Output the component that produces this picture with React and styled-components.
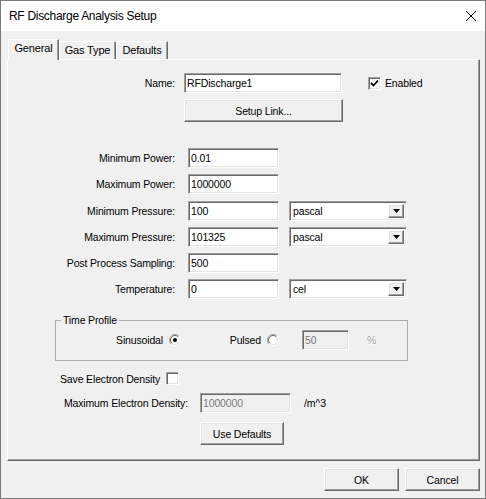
import React from "react";
import styled, { createGlobalStyle } from "styled-components";

const GlobalStyle = createGlobalStyle`
  html, body {
    margin: 0;
    padding: 0;
    background: #fff;
  }
  body {
    font-family: "Liberation Sans", Arial, sans-serif;
    font-size: 10.5px;
    letter-spacing: -0.15px;
    color: #000;
  }
`;

const raised = `
  border: 1px solid;
  border-color: #fff #696969 #696969 #fff;
  box-shadow: inset -1px -1px 0 #a0a0a0, inset 1px 1px 0 #e3e3e3;
  background: #f0f0f0;
`;

const sunken = `
  border: 1px solid;
  border-color: #a0a0a0 #fff #fff #a0a0a0;
  box-shadow: inset 1px 1px 0 #696969, inset -1px -1px 0 #e3e3e3;
`;

const Window = styled.div`
  width: 486px;
  height: 499px;
  box-sizing: border-box;
  border: 1px solid #7b7b7b;
  display: flex;
  flex-direction: column;
  background: #f0f0f0;
`;

const TitleBar = styled.div`
  height: 30px;
  flex: none;
  background: #fff;
  display: flex;
  align-items: center;
  justify-content: space-between;
  padding-left: 8px;
  font-size: 12px;
  letter-spacing: -0.3px;
`;

const CloseButton = styled.div`
  width: 28px;
  height: 30px;
  display: flex;
  align-items: center;
  justify-content: center;
`;

const Body = styled.div`
  flex: 1;
  display: flex;
  flex-direction: column;
  padding: 8px 5px 0 6px;
`;

const TabStrip = styled.div`
  display: flex;
  align-items: flex-end;
  height: 21px;
  margin: 0 0 -1px 1px;
  position: relative;
  z-index: 1;
`;

const Tab = styled.div`
  box-sizing: border-box;
  width: ${(p) => p.$w}px;
  height: ${(p) => (p.$active ? 21 : 18)}px;
  margin-bottom: ${(p) => (p.$active ? 0 : 1)}px;
  border: 1px solid;
  border-bottom: none;
  border-color: #fff #696969 transparent #fff;
  box-shadow: inset -1px 0 0 #a0a0a0;
  background: #f0f0f0;
  display: flex;
  justify-content: center;
  padding-top: 2px;
  font-size: 11px;
`;

const Panel = styled.div`
  box-sizing: border-box;
  height: 402px;
  border: 1px solid;
  border-color: #fff #696969 #696969 #fff;
  box-shadow: inset -1px -1px 0 #a0a0a0;
  padding-top: 13px;
  display: flex;
  flex-direction: column;
`;

const Row = styled.div`
  display: flex;
  align-items: center;
  height: ${(p) => p.$h || 20}px;
  margin-top: ${(p) => p.$top || 0}px;
  margin-left: ${(p) => p.$indent || 0}px;
`;

const Fields = styled.div`
  display: flex;
  flex-direction: column;
  gap: 6.25px;
  margin-top: 26px;
`;

const FieldLabel = styled.label`
  flex: none;
  box-sizing: border-box;
  width: ${(p) => p.$w}px;
  padding-right: ${(p) => p.$gap}px;
  text-align: right;
`;

const TextBox = styled.input`
  box-sizing: border-box;
  flex: none;
  width: ${(p) => p.$w}px;
  height: 20px;
  margin: 0 0 0 ${(p) => p.$left || 0}px;
  padding: 0 2px;
  ${sunken}
  background: ${(p) => (p.disabled ? "#f0f0f0" : "#fff")};
  color: ${(p) => (p.disabled ? "#7b7b7b" : "#000")};
  font: inherit;
  letter-spacing: inherit;
  outline: none;
`;

const Combo = styled.div`
  box-sizing: border-box;
  flex: none;
  width: 118px;
  height: 20px;
  margin-left: 10px;
  ${sunken}
  background: #fff;
  padding: 2px;
  display: flex;
`;

const ComboText = styled.span`
  flex: 1;
  display: flex;
  align-items: center;
  padding-left: 1px;
`;

const ComboArrow = styled.span`
  box-sizing: border-box;
  width: 16px;
  ${raised}
  display: flex;
  align-items: center;
  justify-content: center;
`;

const Button = styled.button`
  box-sizing: border-box;
  flex: none;
  width: ${(p) => p.$w}px;
  height: 23px;
  margin: ${(p) => p.$top || 0}px 0 0 ${(p) => p.$left || 0}px;
  padding: 0;
  ${raised}
  font: inherit;
  letter-spacing: inherit;
  color: #000;
`;

const CheckBox = styled.span`
  box-sizing: border-box;
  flex: none;
  width: 13px;
  height: 13px;
  ${sunken}
  background: #fff;
  display: flex;
  align-items: center;
  justify-content: center;
  margin: 0 ${(p) => p.$right || 0}px 0 ${(p) => p.$left || 0}px;
`;

const Group = styled.fieldset`
  box-sizing: border-box;
  width: 353px;
  min-width: 0;
  margin: 15px 0 0 47px;
  padding: 3px 0 10px;
  border: 1px solid #adadad;
`;

const Legend = styled.legend`
  margin-left: 5px;
  padding: 0 2px;
  line-height: 13px;
`;

const RadioOption = styled.label`
  flex: none;
  width: ${(p) => p.$w}px;
  display: flex;
  align-items: center;
  justify-content: flex-end;
  gap: 6px;
`;

const Unit = styled.span`
  margin-left: ${(p) => p.$left}px;
  color: ${(p) => (p.$dim ? "#a0a0a0" : "#000")};
  text-shadow: ${(p) => (p.$dim ? "1px 1px 0 #fff" : "none")};
`;

const Footer = styled.div`
  display: flex;
  justify-content: flex-end;
  gap: 6px;
  margin-top: 7px;
`;

const Check = () => (
  <svg width="9" height="9" viewBox="0 0 9 9">
    <polyline points="1,4 3.5,6.5 8,1.5" fill="none" stroke="#000" strokeWidth="1.8" />
  </svg>
);

const Radio = ({ checked }) => (
  <svg width="12" height="12" viewBox="0 0 12 12">
    <circle cx="6" cy="6" r="5" fill="#fff" />
    <path d="M2.1 9.9 A5.5 5.5 0 0 1 9.9 2.1" fill="none" stroke="#a0a0a0" />
    <path d="M2.8 9.2 A4.5 4.5 0 0 1 9.2 2.8" fill="none" stroke="#696969" />
    <path d="M9.9 2.1 A5.5 5.5 0 0 1 2.1 9.9" fill="none" stroke="#fff" />
    <path d="M9.2 2.8 A4.5 4.5 0 0 1 2.8 9.2" fill="none" stroke="#e3e3e3" />
    {checked && <circle cx="6" cy="6" r="2" fill="#000" />}
  </svg>
);

const Arrow = () => (
  <svg width="7" height="4" viewBox="0 0 7 4">
    <polygon points="0,0 7,0 3.5,4" fill="#000" />
  </svg>
);

const Dropdown = ({ value }) => (
  <Combo>
    <ComboText>{value}</ComboText>
    <ComboArrow>
      <Arrow />
    </ComboArrow>
  </Combo>
);

const fields = [
  { label: "Minimum Power:", value: "0.01" },
  { label: "Maximum Power:", value: "1000000" },
  { label: "Minimum Pressure:", value: "100", unit: "pascal" },
  { label: "Maximum Pressure:", value: "101325", unit: "pascal" },
  { label: "Post Process Sampling:", value: "500" },
  { label: "Temperature:", value: "0", unit: "cel" },
];

export default function App() {
  return (
    <>
      <GlobalStyle />
      <Window>
        <TitleBar>
          <span>RF Discharge Analysis Setup</span>
          <CloseButton>
            <svg width="10" height="10" viewBox="0 0 10 10">
              <path d="M0 0 L10 10 M10 0 L0 10" stroke="#000" strokeWidth="1" />
            </svg>
          </CloseButton>
        </TitleBar>
        <Body>
          <TabStrip>
            <Tab $w={51} $active>General</Tab>
            <Tab $w={57}>Gas Type</Tab>
            <Tab $w={52}>Defaults</Tab>
          </TabStrip>
          <Panel>
            <Row>
              <FieldLabel $w={176} $gap={9}>Name:</FieldLabel>
              <TextBox $w={158} defaultValue="RFDischarge1" />
              <CheckBox $left={26} $right={4}>
                <Check />
              </CheckBox>
              <span>Enabled</span>
            </Row>
            <Button $w={159} $top={6} $left={176}>Setup Link...</Button>

            <Fields>
              {fields.map((f) => (
                <Row key={f.label}>
                  <FieldLabel $w={180} $gap={13}>{f.label}</FieldLabel>
                  <TextBox $w={91} defaultValue={f.value} />
                  {f.unit && <Dropdown value={f.unit} />}
                </Row>
              ))}
            </Fields>

            <Group>
              <Legend>Time Profile</Legend>
              <Row>
                <RadioOption $w={125}>
                  Sinusoidal <Radio checked />
                </RadioOption>
                <RadioOption $w={98}>
                  Pulsed <Radio />
                </RadioOption>
                <TextBox $w={47} $left={23} defaultValue="50" disabled />
                <Unit $left={18} $dim>%</Unit>
              </Row>
            </Group>

            <Row $h={13} $top={11} $indent={52}>
              <span>Save Electron Density</span>
              <CheckBox $left={6} />
            </Row>
            <Row $top={8}>
              <FieldLabel $w={192} $gap={12}>Maximum Electron Density:</FieldLabel>
              <TextBox $w={91} defaultValue="1000000" disabled />
              <Unit $left={13}>/m^3</Unit>
            </Row>
            <Button $w={84} $top={9} $left={192}>Use Defaults</Button>
          </Panel>
          <Footer>
            <Button $w={75}>OK</Button>
            <Button $w={75}>Cancel</Button>
          </Footer>
        </Body>
      </Window>
    </>
  );
}
